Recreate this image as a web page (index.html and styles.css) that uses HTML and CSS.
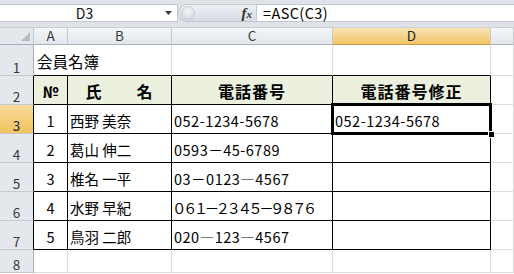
FILE: index.html
```html
<!DOCTYPE html>
<html lang="ja">
<head>
<meta charset="utf-8">
<title>会員名簿</title>
<link rel="stylesheet" href="styles.css">
</head>
<body>
<div class="fbar">
  <div class="namebox">
    <span class="nb-text">D3</span>
    <svg class="nb-arrow" width="7" height="4" viewBox="0 0 7 4"><path d="M0 0H7L3.5 4Z" fill="#3c3c3c"/></svg>
  </div>
  <div class="fx-area">
    <span class="oval-btn"></span>
    <span class="fx">f<span class="fx-x">x</span></span>
  </div>
  <div class="formula">=ASC(C3)</div>
</div>
<div class="sheet">
  <div class="corner"><svg class="corner-tri" width="9" height="9" viewBox="0 0 9 9"><path d="M9 0V9H0Z" fill="#b7bcc3"/></svg></div>
  <div class="ch">A</div>
  <div class="ch">B</div>
  <div class="ch">C</div>
  <div class="ch sel">D</div>
  <div class="ch"></div>

  <div class="rh">1</div>
  <div class="cell title">会員名簿</div>
  <div class="cell tb"></div>
  <div class="cell tb"></div>
  <div class="cell tb"></div>
  <div class="cell"></div>

  <div class="rh tl">2</div>
  <div class="cell t hd no">№</div>
  <div class="cell t hd">氏　　名</div>
  <div class="cell t hd">電話番号</div>
  <div class="cell t hd">電話番号修正</div>
  <div class="cell"></div>

  <div class="rh tl sel">3</div>
  <div class="cell t num">1</div>
  <div class="cell t">西野 美奈</div>
  <div class="cell t ph">052-1234-5678</div>
  <div class="cell t ph active">052-1234-5678<div class="cursor"></div><div class="handle"></div></div>
  <div class="cell"></div>

  <div class="rh tl">4</div>
  <div class="cell t num">2</div>
  <div class="cell t">葛山 伸二</div>
  <div class="cell t ph">0593－45-6789</div>
  <div class="cell t"></div>
  <div class="cell"></div>

  <div class="rh tl">5</div>
  <div class="cell t num">3</div>
  <div class="cell t">椎名 一平</div>
  <div class="cell t ph">03－0123―4567</div>
  <div class="cell t"></div>
  <div class="cell"></div>

  <div class="rh tl">6</div>
  <div class="cell t num">4</div>
  <div class="cell t">水野 早紀</div>
  <div class="cell t wide">０６１－２３４５－９８７６</div>
  <div class="cell t"></div>
  <div class="cell"></div>

  <div class="rh tl">7</div>
  <div class="cell t num">5</div>
  <div class="cell t">鳥羽 二郎</div>
  <div class="cell t ph">020―123―4567</div>
  <div class="cell t"></div>
  <div class="cell"></div>

  <div class="rh">8</div>
  <div class="cell"></div>
  <div class="cell"></div>
  <div class="cell"></div>
  <div class="cell"></div>
  <div class="cell"></div>
</div>
</body>
</html>
```
FILE: styles.css
```css
* { box-sizing: border-box; }
html, body { margin: 0; padding: 0; }
body {
  width: 514px;
  height: 274px;
  overflow: hidden;
  background: #fff;
  font-family: "Noto Sans CJK JP", "Noto Sans", sans-serif;
  color: #000;
}

/* formula bar */
.fbar {
  height: 28px;
  background: #dfe3e8;
  display: flex;
  padding: 4px 0 5px 0;
  border-bottom: 1px solid #c9ced5;
}
.namebox {
  width: 178px;
  background: #fff;
  display: flex;
  align-items: center;
  border: 1px solid #c3c8cf;
  border-left: none;
  padding-right: 5px;
}
.nb-text {
  flex: 1;
  text-align: center;
  font-size: 14px;
  line-height: 1;
  padding-left: 4px;
  color: #111;
}
.nb-arrow { display: block; }
.fx-area {
  width: 78px;
  display: flex;
  align-items: center;
  justify-content: space-between;
  background: linear-gradient(#eef1f5, #d6dce4);
  border-radius: 10px 0 0 10px;
  border: 1px solid #c3c8cf;
  border-right: none;
  padding: 0 4px 0 2px;
}
.oval-btn {
  width: 14px;
  height: 14px;
  border-radius: 50%;
  background: radial-gradient(circle at 50% 35%, #f4f6f8, #cfd5dd);
  border: 1px solid #c7cdd5;
}
.fx {
  font-family: "Liberation Serif", serif;
  font-style: italic;
  font-weight: 700;
  font-size: 15px;
  line-height: 1;
  color: #333;
}
.fx-x { font-size: 11px; }
.formula {
  flex: 1;
  background: #fff;
  border: 1px solid #c3c8cf;
  border-right: none;
  display: flex;
  align-items: center;
  padding-left: 6px;
  font-size: 14.5px;
  letter-spacing: 0.4px;
  line-height: 1;
}

/* sheet */
.sheet {
  display: grid;
  grid-template-columns: 34px 34px 104px 161px 158px 23px;
  grid-template-rows: 17px 31px repeat(6, 29px) 23px;
}
.corner {
  background: #e4e7ec;
  border-right: 1px solid #c5cad1;
  border-bottom: 1px solid #a9b0ba;
  display: flex;
  justify-content: flex-end;
  align-items: flex-end;
  padding: 0 3px 3px 0;
}
.corner-tri { display: block; }
.ch {
  background: linear-gradient(#f4f6f8, #e2e6eb);
  border-right: 1px solid #c5cad1;
  border-bottom: 1px solid #a9b0ba;
  display: flex;
  justify-content: center;
  align-items: center;
  font-size: 13.5px;
  line-height: 1;
  color: #3a3a3a;
}
.rh {
  background: #e4e7ec;
  border-right: 1px solid #a9b0ba;
  border-bottom: 1px solid #c5cad1;
  display: flex;
  justify-content: center;
  align-items: flex-end;
  padding-bottom: 1px;
  font-size: 13.5px;
  line-height: 1;
  color: #3a3a3a;
}
.rh.tl { border-right-color: #000; }
.ch.sel {
  background: linear-gradient(#fae3b5, #f2c564);
  border-bottom-color: #c49a4d;
  color: #222;
}
.rh.sel {
  background: linear-gradient(#f9db9a, #f1c35f);
  color: #222;
}

.cell {
  border-right: 1px solid #dadcdd;
  border-bottom: 1px solid #dadcdd;
  display: flex;
  align-items: flex-end;
  padding: 0 2px 5px 2px;
  font-size: 14.5px;
  line-height: 1;
  white-space: nowrap;
}
.cell.tb { border-bottom-color: #000; }
.cell.t { border-right-color: #000; border-bottom-color: #000; }
.cell.title {
  border-right: none;
  border-bottom-color: #000;
  font-size: 15.5px;
  padding-left: 3px;
  padding-bottom: 6px;
  position: relative;
  z-index: 1;
  overflow: visible;
}
.cell.hd {
  background: #ebf1de;
  justify-content: center;
  font-weight: 700;
  font-size: 16px;
  letter-spacing: 1px;
  padding-bottom: 5px;
}
.cell.hd.no { letter-spacing: 0; font-size: 15px; }
.cell.num { justify-content: center; }
.cell.ph { letter-spacing: 0.5px; }
.cell.wide { letter-spacing: -3.6px; padding-left: 0; }

.cell.active {
  position: relative;
  z-index: 2;
  overflow: visible;
}
.cursor {
  position: absolute;
  top: -2px;
  left: -2px;
  right: -2px;
  bottom: -2px;
  border: 3px double #000;
}
.handle {
  position: absolute;
  right: -5px;
  bottom: -5px;
  width: 7px;
  height: 7px;
  background: #000;
  border: 1px solid #fff;
}
```
